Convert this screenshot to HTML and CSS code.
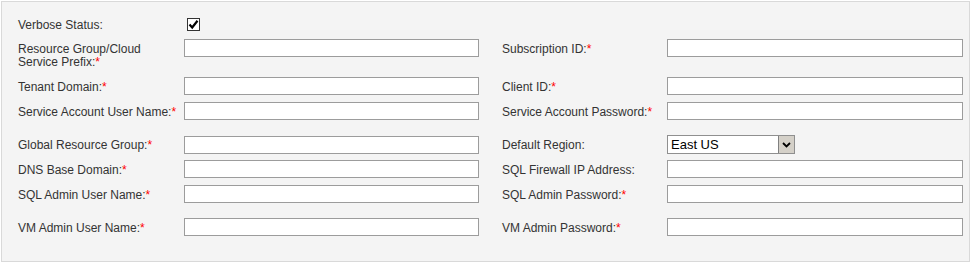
FILE: index.html
```html
<!DOCTYPE html>
<html lang="en">
  <head>
    <meta charset="UTF-8" />
    <title>Cloud Settings</title>
    <link rel="stylesheet" href="styles.css">
  </head>
  <body>
    <div class="panel">
      <div class="row first">
        <label class="lbl">Verbose Status:</label>
        <span class="check">
          <svg width="11" height="11" viewBox="0 0 11 11">
            <path d="M1.5 5.5 L4.2 8.5 L9.5 1.8" fill="none" stroke="#000" stroke-width="2.2" />
          </svg>
        </span>
      </div>

      <div class="row tall">
        <label class="lbl">Resource Group/Cloud<br />Service Prefix:<span class="req">*</span></label>
        <input type="text" class="txt" />
        <label class="lbl right">Subscription ID:<span class="req">*</span></label>
        <input type="text" class="txt wide" />
      </div>

      <div class="row">
        <label class="lbl">Tenant Domain:<span class="req">*</span></label>
        <input type="text" class="txt" />
        <label class="lbl right">Client ID:<span class="req">*</span></label>
        <input type="text" class="txt wide" />
      </div>

      <div class="row">
        <label class="lbl">Service Account User Name:<span class="req">*</span></label>
        <input type="text" class="txt" />
        <label class="lbl right">Service Account Password:<span class="req">*</span></label>
        <input type="password" class="txt wide" />
      </div>

      <div class="row spaced">
        <label class="lbl">Global Resource Group:<span class="req">*</span></label>
        <input type="text" class="txt" />
        <label class="lbl right">Default Region:</label>
        <div class="sel">
          <select>
            <option>East US</option>
            <option>West US</option>
            <option>North Europe</option>
          </select>
          <span class="arrow">
            <svg width="9" height="6" viewBox="0 0 9 6">
              <path d="M1 1 L4.5 4.5 L8 1" fill="none" stroke="#000" stroke-width="1.8" />
            </svg>
          </span>
        </div>
      </div>

      <div class="row">
        <label class="lbl">DNS Base Domain:<span class="req">*</span></label>
        <input type="text" class="txt" />
        <label class="lbl right">SQL Firewall IP Address:</label>
        <input type="text" class="txt wide" />
      </div>

      <div class="row">
        <label class="lbl">SQL Admin User Name:<span class="req">*</span></label>
        <input type="text" class="txt" />
        <label class="lbl right">SQL Admin Password:<span class="req">*</span></label>
        <input type="password" class="txt wide" />
      </div>

      <div class="row spaced">
        <label class="lbl">VM Admin User Name:<span class="req">*</span></label>
        <input type="text" class="txt" />
        <label class="lbl right">VM Admin Password:<span class="req">*</span></label>
        <input type="password" class="txt wide" />
      </div>
    </div>
  </body>
</html>
```

FILE: styles.css
```css
* {
  margin: 0;
  padding: 0;
  box-sizing: border-box;
}
body {
  font-family: "Liberation Sans", Arial, sans-serif;
  font-size: 12px;
  color: #333;
  background: #fff;
}
.panel {
  width: 969px;
  height: 261px;
  margin: 1px 0 0 1px;
  border: 1px solid #d9d9d9;
  background: #f4f4f4;
  padding: 15px 6px 0 16px;
}

.row {
  display: grid;
  grid-template-columns: 166px 295px 188px 296px;
  align-items: center;
  height: 18px;
  margin-top: 7px;
}
.row.first {
  height: 13px;
  margin-top: 0;
}
.row.tall {
  height: 31px;
  margin-top: 9px;
  align-items: start;
}
.row.tall .lbl {
  padding-top: 4px;
}
.row.spaced {
  margin-top: 15px;
}

.lbl {
  line-height: 13px;
  padding-top: 2px;
}
.lbl.right {
  padding-left: 23px;
}
.req {
  color: #f00;
}

.txt {
  width: 100%;
  height: 18px;
  border: 1px solid #9c9c9c;
  background: #fff;
  font-family: inherit;
  font-size: 12px;
  outline: none;
}
.txt.wide {
  width: 296px;
}

.check {
  display: flex;
  align-items: center;
  justify-content: center;
  width: 13px;
  height: 13px;
  margin-left: 3px;
  border: 1px solid #333;
  background: #fff;
}

.sel {
  position: relative;
  width: 128px;
  height: 19px;
}
.sel select {
  appearance: none;
  width: 100%;
  height: 19px;
  border: 1px solid #8f8f8f;
  background: #fff;
  font-family: inherit;
  font-size: 13px;
  color: #000;
  padding-left: 3px;
  outline: none;
}
.arrow {
  position: absolute;
  top: 1px;
  right: 1px;
  width: 16px;
  height: 17px;
  display: flex;
  align-items: center;
  justify-content: center;
  background: #d4d0c8;
  border-left: 1px solid #808080;
  pointer-events: none;
}
```
